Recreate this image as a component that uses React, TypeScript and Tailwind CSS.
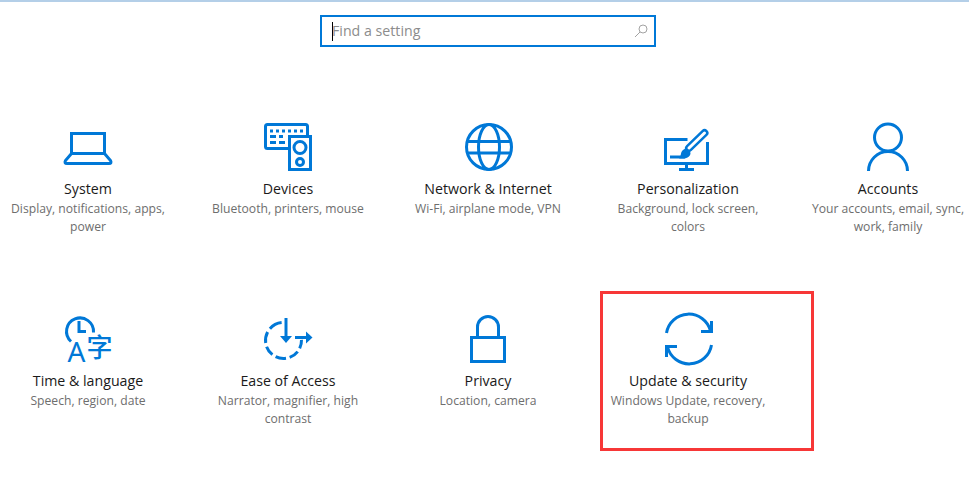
const BLUE = "#0078d7";

function Svg({ children }: { children: React.ReactNode }) {
  return (
    <svg width="60" height="51" viewBox="0 0 60 51" fill="none" stroke={BLUE} strokeWidth="3" className="block overflow-visible">
      {children}
    </svg>
  );
}

const Laptop = () => (
  <Svg>
    <path d="M13.500 34V13.500H46.500V34" />
    <path d="M13.500 33.500H46.500L52.500 40.500Q54 43.500 51 43.500H9Q6 43.500 7.500 40.500Z" />
  </Svg>
);

const Devices = () => (
  <Svg>
    <path d="M30 28.500H9.500Q7.500 28.500 7.500 26.500V6.500Q7.500 4.500 9.500 4.500H47.500Q49.500 4.500 49.500 6.500V15" />
    <g fill={BLUE} stroke="none">
      <rect x="12" y="9.500" width="3" height="3" />
      <rect x="18" y="9.500" width="3" height="3" />
      <rect x="24" y="9.500" width="3" height="3" />
      <rect x="30" y="9.500" width="3" height="3" />
      <rect x="36" y="9.500" width="3" height="3" />
      <rect x="42" y="9.500" width="3" height="3" />
      <rect x="12" y="15" width="6" height="3" />
      <rect x="21" y="15" width="4" height="3" />
      <rect x="12" y="21" width="6" height="3" />
      <rect x="21" y="21" width="6" height="3" />
    </g>
    <rect x="31.500" y="16.500" width="21" height="33" />
    <circle cx="42" cy="27.500" r="6" />
    <circle cx="42" cy="42" r="3.500" />
  </Svg>
);

const Globe = () => (
  <Svg>
    <circle cx="31" cy="27" r="22.500" />
    <ellipse cx="31" cy="27" rx="10.500" ry="22.500" />
    <path d="M10 21.500H52M10 33H52" />
  </Svg>
);

const Personal = () => (
  <Svg>
    <path d="M29.500 19.500H7.500V43.500H49.500V22" />
    <path d="M28.500 45V50M21 49.500H36" />
    <path d="M12 37H27" />
    <path d="M31 28L46.500 13" strokeWidth="8" strokeLinecap="round" />
    <path d="M31 28L46.500 13" strokeWidth="3" strokeLinecap="round" stroke="#fff" />
    <path d="M21 38.500C23.500 36.500 22 32.500 25 30C27 28.300 29.500 28.500 31 30C33 32 33 34.500 31 36.500C28.500 39 24 38.500 21 38.500Z" fill={BLUE} stroke="none" />
  </Svg>
);

const Person = () => (
  <Svg>
    <circle cx="30" cy="17.500" r="13.500" />
    <path d="M10.500 51A19.500 19.500 0 0 1 49.500 51" />
  </Svg>
);

const TimeLang = () => (
  <Svg>
    <path d="M13 29.500A13.500 13.500 0 1 1 35.500 20.500" />
    <path d="M21 9V19.500H28" />
    <text x="9.500" y="50" fontSize="28" fill={BLUE} stroke="none" style={{ fontFamily: '"Noto Sans", sans-serif' }}>A</text>
    <text x="28.500" y="45" fontSize="26" fill={BLUE} stroke="none" fontWeight="500" style={{ fontFamily: '"Noto Sans CJK SC", sans-serif' }}>字</text>
  </Svg>
);

function arc(cx: number, cy: number, r: number, a: number, b: number) {
  const p = (d: number) => {
    const t = (d * Math.PI) / 180;
    return `${(cx + r * Math.sin(t)).toFixed(2)} ${(cy - r * Math.cos(t)).toFixed(2)}`;
  };
  return `M${p(a)}A${r} ${r} 0 0 1 ${p(b)}`;
}

const Ease = () => (
  <Svg>
    {[[311, 354], [262, 298], [218, 250], [172, 206], [128, 160], [88, 116]].map(([a, b]) => (
      <path key={a} d={arc(25.5, 28.5, 18, a, b)} />
    ))}
    <path d="M28 6V26" />
    <path d="M22 24H34L28 31Z" fill={BLUE} stroke="none" />
    <path d="M37 25.500H50" />
    <path d="M48 19.500L54.500 25.500L48 31.500Z" fill={BLUE} stroke="none" />
  </Svg>
);

const Lock = () => (
  <Svg>
    <rect x="13.500" y="25.500" width="33" height="24" />
    <path d="M19.500 24V15A10.500 10.500 0 0 1 40.500 15V24" />
  </Svg>
);

const Sync = () => (
  <Svg>
    <path d="M8.500 21A22.500 22.500 0 0 1 52.500 19" />
    <path d="M53.500 9V19.500H43" />
    <path d="M53.500 33A22.500 22.500 0 0 1 9.500 35" />
    <path d="M8.500 45V34.500H19" />
  </Svg>
);

const items = [
  { icon: Laptop, title: "System", desc: ["Display, notifications, apps,", "power"] },
  { icon: Devices, title: "Devices", desc: ["Bluetooth, printers, mouse"] },
  { icon: Globe, title: "Network & Internet", desc: ["Wi-Fi, airplane mode, VPN"] },
  { icon: Personal, title: "Personalization", desc: ["Background, lock screen,", "colors"] },
  { icon: Person, title: "Accounts", desc: ["Your accounts, email, sync,", "work, family"] },
  { icon: TimeLang, title: "Time & language", desc: ["Speech, region, date"] },
  { icon: Ease, title: "Ease of Access", desc: ["Narrator, magnifier, high", "contrast"] },
  { icon: Lock, title: "Privacy", desc: ["Location, camera"] },
  { icon: Sync, title: "Update & security", desc: ["Windows Update, recovery,", "backup"], marked: true },
];

export default function App() {
  return (
    <div className="w-[969px] h-[482px] overflow-hidden bg-white" style={{ fontFamily: '"Open Sans", sans-serif' }}>
      <div className="h-[2px] bg-[#b4cfe8]" />
      <div className="ml-[320px] mt-[13px] w-[336px] h-[32px] border-2 border-[#0078d7] flex items-center pl-[10px] pr-[6px]">
        <span className="w-px h-[19px] bg-black shrink-0 mr-[-1px]" />
        <span className="text-[14.200px] text-[#8c8c8c] flex-1 leading-none">Find a setting</span>
        <svg width="14" height="14" viewBox="0 0 14 14" fill="none" stroke="#a3a3a3" strokeWidth="1">
          <circle cx="9" cy="5" r="4" />
          <path d="M6 8L1 13" />
        </svg>
      </div>
      <div className="ml-[-12px] mt-[73px] grid grid-cols-[repeat(5,200px)] auto-rows-[192px]">
        {items.map((it) => (
          <div key={it.title} className="relative flex flex-col items-center text-center">
            <it.icon />
            <div className="mt-[8px] mb-px text-[14.200px] leading-[20px] text-[#1a1a1a]">{it.title}</div>
            {it.desc.map((d) => (
              <div key={d} className="text-[12.150px] leading-[18px] text-[#6e6e6e] whitespace-nowrap">{d}</div>
            ))}
            {it.marked && (
              <div className="absolute left-[12px] top-[-21px] w-[214px] h-[160px] border-[3px] border-[#f73737]" />
            )}
          </div>
        ))}
      </div>
    </div>
  );
}
